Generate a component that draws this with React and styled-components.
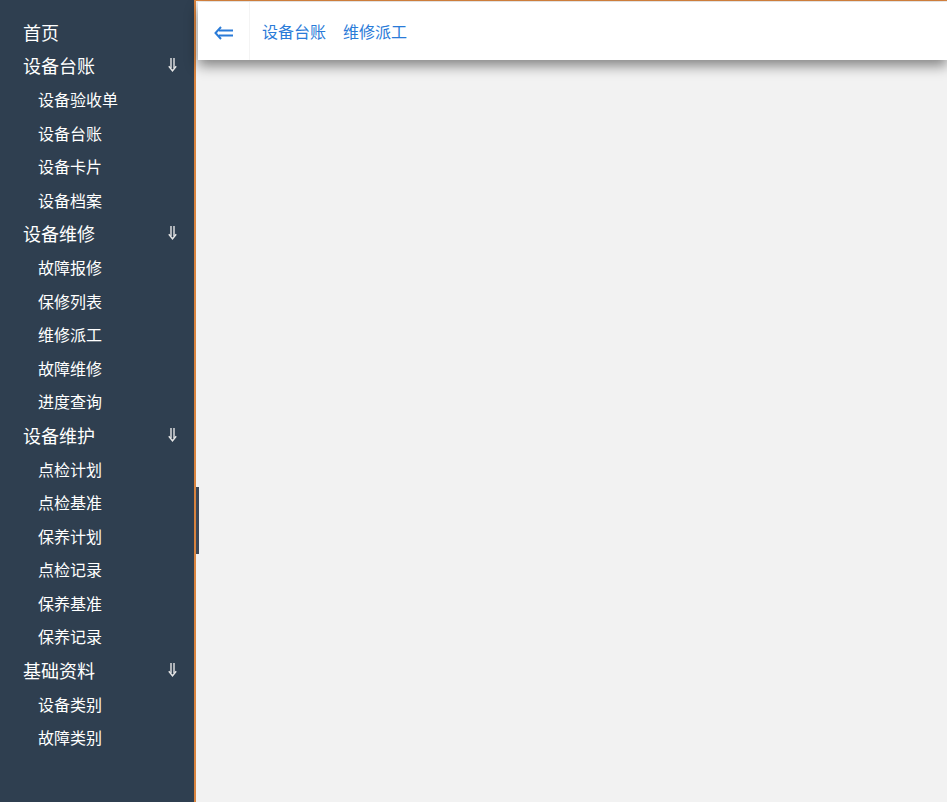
import React from "react";
import styled, { createGlobalStyle } from "styled-components";

const GlobalStyle = createGlobalStyle`
  html, body { margin: 0; padding: 0; height: 100%; }
  body { font-family: "Noto Sans CJK SC", "Noto Sans", sans-serif; overflow: hidden; }
`;

const menu = [
  { title: "首页" },
  { title: "设备台账", items: ["设备验收单", "设备台账", "设备卡片", "设备档案"] },
  { title: "设备维修", items: ["故障报修", "保修列表", "维修派工", "故障维修", "进度查询"] },
  { title: "设备维护", items: ["点检计划", "点检基准", "保养计划", "点检记录", "保养基准", "保养记录"] },
  { title: "基础资料", items: ["设备类别", "故障类别"] },
];

const DownArrow = () => (
  <svg width="9" height="14" viewBox="0 0 9 14" fill="none" stroke="#e6e6e6" strokeWidth="1.4">
    <path d="M3 0v10M6 0v10" />
    <path d="M0.8 8.2L4.5 12.8L8.2 8.2" strokeLinejoin="miter" />
  </svg>
);

const LeftArrow = () => (
  <svg width="19" height="14" viewBox="0 0 19 14" fill="none" stroke="#2a7bd8" strokeWidth="2">
    <path d="M5 4.5H19M5 9.5H19" />
    <path d="M7 1L1.5 7L7 13" />
  </svg>
);

function App() {
  return (
    <Layout>
      <GlobalStyle />
      <Sidebar>
        {menu.map((g) => (
          <React.Fragment key={g.title}>
            <GroupRow>
              <span>{g.title}</span>
              {g.items && <DownArrow />}
            </GroupRow>
            {g.items &&
              g.items.map((it) => <ItemRow key={it}>{it}</ItemRow>)}
          </React.Fragment>
        ))}
      </Sidebar>
      <Main>
        <Handle />
        <Header>
          <Toggle>
            <LeftArrow />
          </Toggle>
          <Crumbs>
            <Crumb>设备台账</Crumb>
            <Crumb>维修派工</Crumb>
          </Crumbs>
        </Header>
      </Main>
    </Layout>
  );
}

const Layout = styled.div`
  display: flex;
  height: 100vh;
`;

const Sidebar = styled.nav`
  width: 194px;
  flex-shrink: 0;
  background: #2f3f50;
  border-right: 2px solid #d9843f;
  padding-top: 15px;
  box-sizing: content-box;
  color: #fff;
`;

const GroupRow = styled.div`
  height: 33.6px;
  display: flex;
  align-items: center;
  justify-content: space-between;
  padding: 0 17px 0 23px;
  font-size: 18px;
`;

const ItemRow = styled.div`
  height: 33.6px;
  display: flex;
  align-items: center;
  padding-left: 38px;
  font-size: 16px;
`;

const Main = styled.main`
  flex: 1;
  position: relative;
  background: #f2f2f2;
  border-top: 1px solid #d9843f;
`;

const Handle = styled.div`
  position: absolute;
  left: 0;
  top: 486px;
  width: 3px;
  height: 67px;
  background: #3b4757;
`;

const Header = styled.header`
  margin: 1px 0 0 2px;
  height: 58px;
  background: #fff;
  display: flex;
  align-items: center;
  box-shadow: 0 6px 12px rgba(0, 0, 0, 0.45);
`;

const Toggle = styled.div`
  width: 52px;
  height: 100%;
  display: flex;
  align-items: center;
  justify-content: center;
  border-right: 1px solid #f4f4f4;
  box-sizing: border-box;
  padding-top: 4px;
`;

const Crumbs = styled.div`
  display: flex;
  gap: 17px;
  padding-left: 12px;
`;

const Crumb = styled.a`
  color: #2a7bd8;
  font-size: 16px;
  cursor: pointer;
`;

export default App;
